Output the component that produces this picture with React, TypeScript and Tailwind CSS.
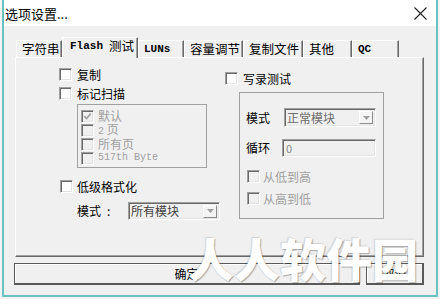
import React from "react";

const CJK = "font-['Noto_Sans_CJK_SC',sans-serif]";
const MONO = "font-['Liberation_Mono','Noto_Sans_CJK_SC',monospace]";

function Box({ checked = false, disabled = false }: { checked?: boolean; disabled?: boolean }) {
  return (
    <div
      className={`w-[13px] h-[13px] shrink-0 flex items-center justify-center border border-t-[#a0a0a0] border-l-[#a0a0a0] border-b-white border-r-white shadow-[inset_1px_1px_0_#696969,inset_-1px_-1px_0_#e3e3e3] ${
        disabled ? "bg-[#f0f0f0]" : "bg-white"
      }`}
    >
      {checked && (
        <svg width="9" height="9" viewBox="0 0 9 9">
          <path d="M1.2 4.2 L3.5 6.6 L7.8 1.6" stroke={disabled ? "#a0a0a0" : "#000"} strokeWidth="1.7" fill="none" />
        </svg>
      )}
    </div>
  );
}

function Select({ text, cls, textCls }: { text: string; cls: string; textCls: string }) {
  return (
    <div
      className={`flex items-center justify-between bg-[#f0f0f0] border border-t-[#a0a0a0] border-l-[#a0a0a0] border-b-white border-r-white shadow-[inset_1px_1px_0_#696969,inset_-1px_-1px_0_#e3e3e3] pl-[2px] pr-[2px] ${cls}`}
    >
      <span className={`text-[12px] leading-none ${textCls}`}>{text}</span>
      <div className="w-[14px] h-[13px] bg-[#f4f4f4] border border-t-white border-l-white border-b-[#8a8a8a] border-r-[#8a8a8a] flex items-center justify-center">
        <svg width="7" height="4" viewBox="0 0 7 4">
          <path d="M0 0 H7 L3.5 4 Z" fill="#a0a0a0" />
        </svg>
      </div>
    </div>
  );
}

function Tab({ children, w, selected = false }: { children: React.ReactNode; w: string; selected?: boolean }) {
  return (
    <div
      className={`${w} flex items-center border-t border-l border-t-white border-l-white border-r border-r-[#696969] shadow-[inset_-1px_0_0_#a0a0a0] text-[12.5px] leading-none text-black ${
        selected ? "h-[21px] -mb-[1px] relative z-10 bg-[#f0f0f0] pl-[7px] pb-[3px]" : "h-[17px] pl-[5px]"
      }`}
    >
      {children}
    </div>
  );
}

export default function App() {
  return (
    <div className={`w-[440px] h-[299px] bg-[#f4f4f4] relative overflow-hidden ${CJK}`}>
      <div className="ml-[2px] w-[436px] h-[297px] border-x-2 border-b-2 border-[#68c3c0] flex flex-col bg-[#f0f0f0]">
        {/* title bar */}
        <div className="h-[26px] bg-white flex items-center justify-between pl-[1px] pr-[9px] shrink-0">
          <span className="text-[13px] leading-none text-black">选项设置...</span>
          <svg width="13" height="13" viewBox="0 0 13 13">
            <path d="M0.5 0.5 L12.5 12.5 M12.5 0.5 L0.5 12.5" stroke="#222" strokeWidth="1.1" />
          </svg>
        </div>

        {/* body */}
        <div className="flex-1 flex flex-col pt-[11px]">
          {/* tabs */}
          <div className="flex items-end ml-[12px] h-[20px]">
            <Tab w="w-[46px]">字符串</Tab>
            <Tab w="w-[76px]" selected>
              <span className={`${MONO} text-[11px] font-bold`}>Flash</span>
              <span className="ml-[6px]">测试</span>
            </Tab>
            <Tab w="w-[46px]">
              <span className={`${MONO} text-[11px] font-bold`}>LUNs</span>
            </Tab>
            <Tab w="w-[59px]">容量调节</Tab>
            <Tab w="w-[60px]">复制文件</Tab>
            <Tab w="w-[49px]">其他</Tab>
            <Tab w="w-[47px]">
              <span className={`${MONO} text-[11px] font-bold`}>QC</span>
            </Tab>
          </div>

          {/* panel */}
          <div className="ml-[11px] w-[409px] h-[200px] border-t border-l border-t-white border-l-white border-r border-b border-r-[#696969] border-b-[#696969] shadow-[inset_-1px_-1px_0_#a0a0a0] flex text-[12px] leading-none text-black">
            {/* left column */}
            <div className="ml-[43px] pt-[10px] w-[166px] flex flex-col items-start">
              <div className="flex items-center gap-[5px] h-[13px]">
                <Box />
                <span>复制</span>
              </div>
              <div className="flex items-center gap-[5px] h-[13px] mt-[6px]">
                <Box />
                <span>标记扫描</span>
              </div>
              <div className="ml-[18px] mt-[4px] w-[130px] h-[64px] border border-[#a0a0a0] pt-[4px] pl-[3px] flex flex-col text-[#a0a0a0]">
                <div className="flex items-center gap-[4px] h-[14px]">
                  <Box checked disabled />
                  <span>默认</span>
                </div>
                <div className="flex items-center gap-[4px] h-[14px]">
                  <Box disabled />
                  <span>
                    <span className={`${MONO} text-[10px]`}>2</span> 页
                  </span>
                </div>
                <div className="flex items-center gap-[4px] h-[14px]">
                  <Box disabled />
                  <span>所有页</span>
                </div>
                <div className="flex items-center gap-[4px] h-[14px]">
                  <Box disabled />
                  <span className={`${MONO} text-[10px]`}>517th Byte</span>
                </div>
              </div>
              <div className="flex items-center gap-[4px] h-[13px] mt-[12px] ml-[1px]">
                <Box />
                <span>低级格式化</span>
              </div>
              <div className="flex items-center mt-[9px] ml-[18px]">
                <span className="w-[30px]">模式</span>
                <span className="w-[21px]">:</span>
                <Select text="所有模块" cls="w-[92px] h-[18px]" textCls="text-[#404040]" />
              </div>
            </div>

            {/* right column */}
            <div className="pt-[14px] flex flex-col items-start">
              <div className="flex items-center gap-[5px] h-[13px]">
                <Box />
                <span>写录测试</span>
              </div>
              <div className="ml-[14px] mt-[7px] w-[145px] h-[127px] border border-[#a0a0a0] pt-[15px] pl-[6px] flex flex-col items-start">
                <div className="flex items-center">
                  <span className="w-[38px]">模式</span>
                  <Select text="正常模块" cls="w-[92px] h-[19px]" textCls="text-[#6d6d6d]" />
                </div>
                <div className="flex items-center mt-[12px]">
                  <span className="w-[36px]">循环</span>
                  <div className="w-[94px] h-[18px] bg-[#f0f0f0] border border-t-[#a0a0a0] border-l-[#a0a0a0] border-b-white border-r-white shadow-[inset_1px_1px_0_#696969,inset_-1px_-1px_0_#e3e3e3] flex items-center pl-[3px]">
                    <span className="text-[11px] leading-none text-[#8a8a8a]">0</span>
                  </div>
                </div>
                <div className="flex items-center gap-[3px] h-[13px] mt-[13px] ml-[1px] text-[#a0a0a0]">
                  <Box disabled />
                  <span>从低到高</span>
                </div>
                <div className="flex items-center gap-[3px] h-[13px] mt-[9px] ml-[1px] text-[#a0a0a0]">
                  <Box disabled />
                  <span>从高到低</span>
                </div>
              </div>
            </div>
          </div>

          {/* buttons */}
          <div className="flex mt-[6px] ml-[10px] text-[12px] leading-none text-black">
            <div className="w-[346px] h-[22px] border border-[#5a5a5a] border-b-2 border-r-2 shadow-[inset_1px_1px_0_#ffffff] flex items-center justify-center">
              确定
            </div>
            <div className="w-[58px] h-[22px] ml-[6px] border border-[#5a5a5a] border-b-2 border-r-2 shadow-[inset_1px_1px_0_#ffffff] flex items-center justify-center">
              取消
            </div>
          </div>
        </div>
      </div>

      {/* watermark */}
      <div className="absolute left-[188px] top-[234px] text-[46px] font-black leading-none text-white [text-shadow:1px_1px_1px_rgba(0,0,0,0.3),-1px_-1px_1px_rgba(0,0,0,0.12)] pointer-events-none">
        人人软件园
      </div>
    </div>
  );
}
